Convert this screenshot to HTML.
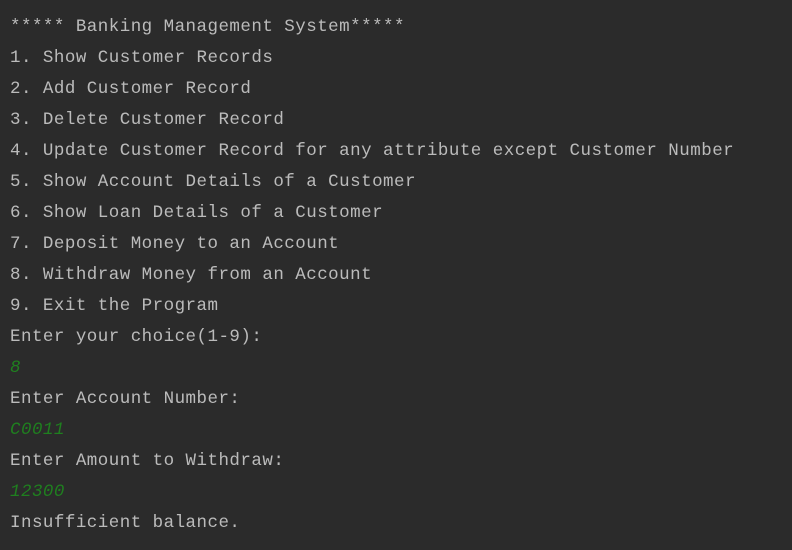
<!DOCTYPE html>
<html><head><meta charset="utf-8"><style>
html,body{margin:0;padding:0;background:#2b2b2b;width:792px;height:550px;overflow:hidden}
pre{margin:0;padding:12px 0 0 10px;font-family:"Liberation Mono","DejaVu Sans Mono",monospace;font-size:17.5px;letter-spacing:0.47px;line-height:31px;color:#bbbbbb}
.g{color:#1f7f1f;font-style:italic}
</style></head><body><pre>***** Banking Management System*****
1. Show Customer Records
2. Add Customer Record
3. Delete Customer Record
4. Update Customer Record for any attribute except Customer Number
5. Show Account Details of a Customer
6. Show Loan Details of a Customer
7. Deposit Money to an Account
8. Withdraw Money from an Account
9. Exit the Program
Enter your choice(1-9):
<span class="g">8</span>
Enter Account Number:
<span class="g">C0011</span>
Enter Amount to Withdraw:
<span class="g">12300</span>
Insufficient balance.</pre></body></html>
